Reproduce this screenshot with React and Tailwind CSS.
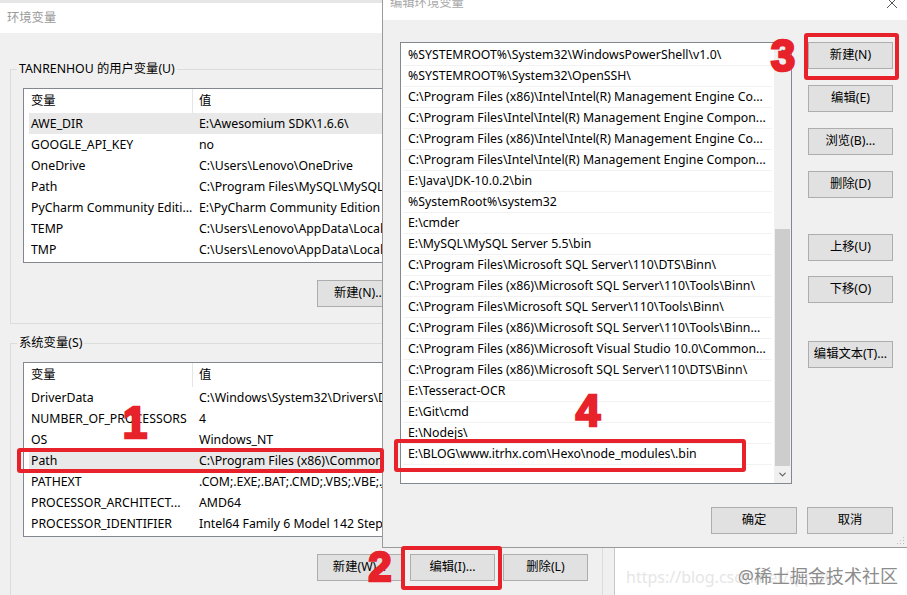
import React from 'react';
import { ChevronUp, ChevronDown } from 'lucide-react';

const userVars = [
  ['AWE_DIR', 'E:\\Awesomium SDK\\1.6.6\\', true],
  ['GOOGLE_API_KEY', 'no'],
  ['OneDrive', 'C:\\Users\\Lenovo\\OneDrive'],
  ['Path', 'C:\\Program Files\\MySQL\\MySQL Server 5.5\\bin;C:\\Users\\Lenovo'],
  ['PyCharm Community Editi...', 'E:\\PyCharm Community Edition 2018.2.4\\bin;'],
  ['TEMP', 'C:\\Users\\Lenovo\\AppData\\Local\\Temp'],
  ['TMP', 'C:\\Users\\Lenovo\\AppData\\Local\\Temp'],
];

const sysVars = [
  ['DriverData', 'C:\\Windows\\System32\\Drivers\\DriverData'],
  ['NUMBER_OF_PROCESSORS', '4'],
  ['OS', 'Windows_NT'],
  ['Path', 'C:\\Program Files (x86)\\Common Files\\Oracle\\Java\\javapath;', true],
  ['PATHEXT', '.COM;.EXE;.BAT;.CMD;.VBS;.VBE;.JS;.JSE;.WSF;.WSH;.MSC'],
  ['PROCESSOR_ARCHITECT...', 'AMD64'],
  ['PROCESSOR_IDENTIFIER', 'Intel64 Family 6 Model 142 Stepping 9, GenuineIntel'],
];

const paths = [
  '%SYSTEMROOT%\\System32\\WindowsPowerShell\\v1.0\\',
  '%SYSTEMROOT%\\System32\\OpenSSH\\',
  'C:\\Program Files (x86)\\Intel\\Intel(R) Management Engine Co...',
  'C:\\Program Files\\Intel\\Intel(R) Management Engine Compon...',
  'C:\\Program Files (x86)\\Intel\\Intel(R) Management Engine Co...',
  'C:\\Program Files\\Intel\\Intel(R) Management Engine Compon...',
  'E:\\Java\\JDK-10.0.2\\bin',
  '%SystemRoot%\\system32',
  'E:\\cmder',
  'E:\\MySQL\\MySQL Server 5.5\\bin',
  'C:\\Program Files\\Microsoft SQL Server\\110\\DTS\\Binn\\',
  'C:\\Program Files (x86)\\Microsoft SQL Server\\110\\Tools\\Binn\\',
  'C:\\Program Files\\Microsoft SQL Server\\110\\Tools\\Binn\\',
  'C:\\Program Files (x86)\\Microsoft SQL Server\\110\\Tools\\Binn...',
  'C:\\Program Files (x86)\\Microsoft Visual Studio 10.0\\Common...',
  'C:\\Program Files (x86)\\Microsoft SQL Server\\110\\DTS\\Binn\\',
  'E:\\Tesseract-OCR',
  'E:\\Git\\cmd',
  'E:\\Nodejs\\',
  'E:\\BLOG\\www.itrhx.com\\Hexo\\node_modules\\.bin',
];

function Btn({ children, className = '' }) {
  return (
    <div className={`flex h-[27px] w-[85px] shrink-0 items-center justify-center border border-[#adadad] bg-[#e1e1e1] text-black ${className}`}>
      {children}
    </div>
  );
}

function VarList({ rows }) {
  return (
    <div className="mt-[10px] h-[175px] overflow-hidden border border-[#828790] bg-white">
      <div className="flex h-[24px] items-center">
        <div className="ml-[5px] flex h-full w-[164px] items-center border-r border-[#e5e5e5] pl-[2px]">变量</div>
        <div className="pl-[6px]">值</div>
      </div>
      {rows.map(([name, value, sel]) => (
        <div key={name + value} className={`ml-[5px] flex h-[21px] items-center whitespace-nowrap pt-[2px] ${sel ? 'bg-[#e9e9e9]' : ''}`}>
          <div className="w-[164px] shrink-0 overflow-hidden pl-[2px]">{name}</div>
          <div className="pl-[6px]">{value}</div>
        </div>
      ))}
    </div>
  );
}

function Group({ label, rows, buttons, className = '' }) {
  return (
    <fieldset className={`ml-[10px] w-[593px] border border-[#dcdcdc] px-[12px] ${className}`}>
      <legend className="-ml-[6px] px-[2px] leading-[18px]">{label}</legend>
      <VarList rows={rows} />
      <div className="mt-[17px] flex justify-end gap-[8px] pr-[2px]">
        {buttons.map((b) => (
          <Btn key={b}>{b}</Btn>
        ))}
      </div>
    </fieldset>
  );
}

export default function App() {
  return (
    <div className="relative h-[595px] w-[907px] overflow-hidden bg-white font-['Noto_Sans','Noto_Sans_CJK_SC',sans-serif] text-[12.3px] text-black">
      {/* background window */}
      <div className="flex h-full w-[615px] flex-col border-r border-[#c8c8c8] bg-[#f0f0f0]">
        <div className="flex h-[33px] shrink-0 items-center border-t-[3px] border-[#e6e6e6] bg-white pl-[7px] text-[#9a9a9a]">
          环境变量
        </div>
        <Group
          className="mt-[27px] pb-[16px]"
          label="TANRENHOU 的用户变量(U)"
          rows={userVars}
          buttons={['新建(N)...', '编辑(E)...', '删除(D)']}
        />
        <Group
          className="mt-[10px] pb-[40px]"
          label="系统变量(S)"
          rows={sysVars}
          buttons={['新建(W)...', '编辑(I)...', '删除(L)']}
        />
      </div>

      {/* edit dialog */}
      <div className="absolute left-[382px] top-0 flex h-[548px] w-[525px] flex-col border-b border-l border-[#9a9a9a] bg-[#f0f0f0]">
        <div className="flex h-[20px] shrink-0 items-start justify-between bg-white">
          <div className="-mt-[5px] ml-[7px] leading-[16px] text-[#a8a8a8]">编辑环境变量</div>
          <svg width="12" height="12" viewBox="0 0 12 12" className="-mt-[3px] mr-[9px]">
            <path d="M1 1 L11 11 M11 1 L1 11" stroke="#555" strokeWidth="1" fill="none" />
          </svg>
        </div>
        <div className="flex flex-col pl-[17px] pr-[14px] pt-[22px]">
          <div className="flex gap-[16px]">
            <div className="flex h-[442px] w-[392px] border border-[#828790] bg-white">
              <div className="flex-1 overflow-hidden pl-[2px] pr-[2px] pt-[2px]">
                {paths.map((p, i) => (
                  <div key={i} className="flex h-[21px] items-center whitespace-nowrap border-b border-[#f2f2f2] pl-[5px] pt-[1px]">
                    {p}
                  </div>
                ))}
              </div>
              <div className="flex w-[17px] flex-col bg-[#f0f0f0]">
                <div className="flex h-[17px] items-center justify-center text-[#606060]">
                  <ChevronUp size={11} strokeWidth={2.5} />
                </div>
                <div className="flex flex-1 flex-col justify-end">
                  <div className="mx-[1px] h-[237px] bg-[#cdcdcd]" />
                </div>
                <div className="flex h-[17px] items-center justify-center text-[#606060]">
                  <ChevronDown size={11} strokeWidth={2.5} />
                </div>
              </div>
            </div>
            <div className="flex flex-col">
              <Btn>新建(N)</Btn>
              <Btn className="mt-[16px]">编辑(E)</Btn>
              <Btn className="mt-[16px]">浏览(B)...</Btn>
              <Btn className="mt-[16px]">删除(D)</Btn>
              <Btn className="mt-[36px]">上移(U)</Btn>
              <Btn className="mt-[15px]">下移(O)</Btn>
              <Btn className="mt-[38px]">编辑文本(T)...</Btn>
            </div>
          </div>
          <div className="mt-[23px] flex justify-end gap-[10px]">
            <Btn className="w-[86px]">确定</Btn>
            <Btn className="w-[86px]">取消</Btn>
          </div>
        </div>
        <svg width="8" height="8" viewBox="0 0 8 8" className="absolute bottom-[2px] right-[2px]">
          <rect x="6" y="0" width="1" height="1" fill="#bdbdbd" />
          <rect x="3" y="3" width="1" height="1" fill="#bdbdbd" />
          <rect x="6" y="3" width="1" height="1" fill="#bdbdbd" />
          <rect x="0" y="6" width="1" height="1" fill="#bdbdbd" />
          <rect x="3" y="6" width="1" height="1" fill="#bdbdbd" />
          <rect x="6" y="6" width="1" height="1" fill="#bdbdbd" />
        </svg>
      </div>

      {/* watermark */}
      <div className="absolute bottom-[6px] left-[626px] whitespace-nowrap text-[16px] text-[#e6e6e6]">https://blog.csdn.net/qq_36</div>
      <div className="absolute bottom-[5px] right-[9px] whitespace-nowrap text-[18px] text-[#8c8c8c]">@稀土掘金技术社区</div>

      {/* red annotations */}
      <div className="absolute left-[17px] top-[448px] h-[25px] w-[367px] rounded-[3px] border-[4px] border-[#e8222b]" />
      <div className="absolute left-[401px] top-[546px] h-[44px] w-[101px] rounded-[3px] border-[4px] border-[#e8222b]" />
      <div className="absolute left-[804px] top-[33px] h-[47px] w-[95px] rounded-[3px] border-[4px] border-[#e8222b]" />
      <div className="absolute left-[394px] top-[439px] h-[33px] w-[352px] rounded-[3px] border-[4px] border-[#e8222b]" />

      <div className="absolute left-[115px] top-[401px] flex h-[44px] w-[40px] items-center justify-center font-['Liberation_Sans',sans-serif] text-[44px] font-bold leading-none text-[#e8222b] [-webkit-text-stroke:2.5px_#e8222b]">1</div>
      <div className="absolute left-[360px] top-[545px] flex h-[44px] w-[40px] items-center justify-center font-['Liberation_Sans',sans-serif] text-[42px] font-bold leading-none text-[#e8222b] [-webkit-text-stroke:2.5px_#e8222b]">2</div>
      <div className="absolute left-[763px] top-[34px] flex h-[44px] w-[40px] items-center justify-center font-['Liberation_Sans',sans-serif] text-[44px] font-bold leading-none text-[#e8222b] [-webkit-text-stroke:2.5px_#e8222b]">3</div>
      <div className="absolute left-[568px] top-[389px] flex h-[44px] w-[40px] items-center justify-center font-['Liberation_Sans',sans-serif] text-[44px] font-bold leading-none text-[#e8222b] [-webkit-text-stroke:2.5px_#e8222b]">4</div>
    </div>
  );
}
